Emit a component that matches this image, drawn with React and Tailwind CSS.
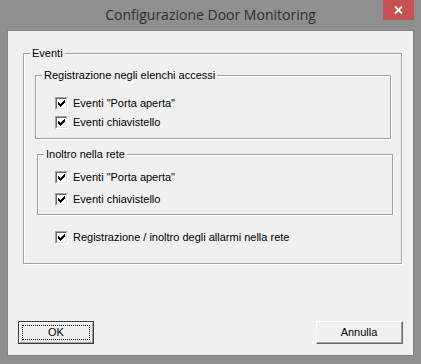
const CHECK_COLS = [2, 3, 4, 3, 2, 1, 0];

function CheckBox() {
  return (
    <div className="w-[13px] h-[13px] shrink-0 border-t border-l border-t-[#a0a0a0] border-l-[#a0a0a0] border-r border-b border-r-white border-b-white">
      <div className="w-full h-full border-t border-l border-t-[#696969] border-l-[#696969] border-r border-b border-r-[#e3e3e3] border-b-[#e3e3e3] bg-white flex items-start justify-start p-[1px]">
        <svg width="7" height="7" viewBox="0 0 7 7" shapeRendering="crispEdges">
          {CHECK_COLS.map((y, x) => (
            <rect key={x} x={x} y={y} width="1" height="3" fill="#000" />
          ))}
        </svg>
      </div>
    </div>
  );
}

function CheckRow({ label, className = "" }) {
  return (
    <div className={`flex items-center h-[13px] gap-[5px] ${className}`}>
      <CheckBox />
      <span className="leading-[13px] whitespace-nowrap">{label}</span>
    </div>
  );
}

function Group({ label, className = "", children }) {
  return (
    <div className={`flex flex-col border border-[#a0a0a0] shadow-[1px_1px_0_#fff,inset_1px_1px_0_#fff] ${className}`}>
      <div className="-mt-[7px] ml-[6px] self-start h-[13px] leading-[13px] px-[2px] bg-[#f0f0f0] whitespace-nowrap">
        {label}
      </div>
      {children}
    </div>
  );
}

export default function App() {
  return (
    <div className="w-[421px] h-[364px] bg-[#8f8f8f] flex flex-col overflow-hidden">
      {/* title bar */}
      <div className="h-[30px] flex items-start shrink-0">
        <div className="w-[38px] shrink-0" />
        <div className="flex-1 text-center leading-[30px] text-[14px] text-[#2e2e2e] font-['Open_Sans',sans-serif] whitespace-nowrap">
          Configurazione Door Monitoring
        </div>
        <div className="w-[31px] h-[20px] mr-[7px] bg-[#c75050] flex items-center justify-center">
          <svg width="9" height="8" viewBox="0 0 9 8">
            <path d="M1 0.5 L8 7.5 M8 0.5 L1 7.5" stroke="#fff" strokeWidth="1.8" />
          </svg>
        </div>
      </div>

      {/* client area */}
      <div className="mx-[7px] h-[326px] shrink-0 border border-[#838383] bg-[#f0f0f0] flex flex-col text-[11px] text-black font-['Liberation_Sans',Arial,sans-serif]">
        <Group label="Eventi" className="ml-[15px] mr-[11px] mt-[22px] h-[211px]">
          <Group label="Registrazione negli elenchi accessi" className="mt-[15px] ml-[11px] mr-[10px] h-[64px]">
            <CheckRow label={'Eventi "Porta aperta"'} className="mt-[15px] ml-[19px]" />
            <CheckRow label="Eventi chiavistello" className="mt-[6px] ml-[19px]" />
          </Group>
          <Group label="Inoltro nella rete" className="mt-[15px] ml-[13px] mr-[8px] h-[61px]">
            <CheckRow label={'Eventi "Porta aperta"'} className="mt-[10px] ml-[17px]" />
            <CheckRow label="Eventi chiavistello" className="mt-[9px] ml-[17px]" />
          </Group>
          <CheckRow label="Registrazione / inoltro degli allarmi nella rete" className="mt-[16px] ml-[31px]" />
        </Group>

        <div className="mt-[57px] mx-[10px] flex justify-between items-start">
          <button className="w-[76px] h-[23px] border border-[#3c3c3c] p-0 bg-[#f0f0f0]">
            <div className="w-full h-full border-t border-l border-t-white border-l-white border-r border-b border-r-[#a0a0a0] border-b-[#a0a0a0] p-[2px]">
              <div className="w-full h-full border border-dotted border-black flex items-center justify-center leading-none">
                OK
              </div>
            </div>
          </button>
          <button className="w-[87px] h-[23px] border-t border-l border-t-white border-l-white border-r border-b border-r-[#696969] border-b-[#696969] p-0 bg-[#f0f0f0]">
            <div className="w-full h-full border-r border-b border-r-[#a0a0a0] border-b-[#a0a0a0] flex items-center justify-center leading-none">
              Annulla
            </div>
          </button>
        </div>
      </div>
    </div>
  );
}
